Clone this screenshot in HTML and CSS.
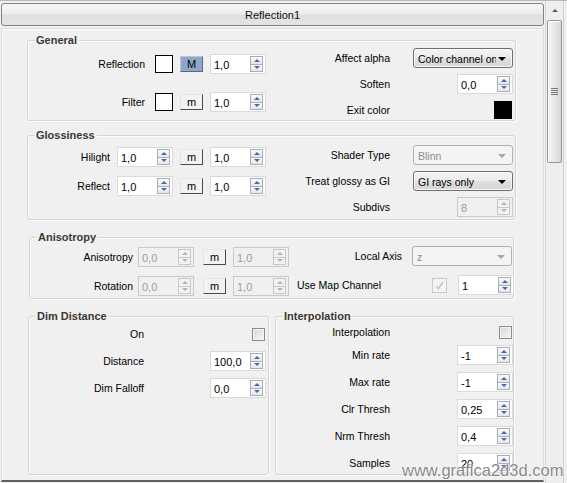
FILE: index.html
```html
<!DOCTYPE html>
<html>
<head>
<meta charset="utf-8">
<link rel="stylesheet" href="styles.css">
</head>
<body>
<div class="window">
  <div class="main">
    <div class="head">Reflection1</div>
    <div class="body">

      <div class="group g-general">
        <div class="gtitle">General</div>
        <div class="gcontent h73">
          <div class="col c-left242 pt7 gap18">
            <div class="row">
              <span class="lbl w117">Reflection</span>
              <span class="swatch white ml10"></span>
              <span class="mbtn active ml7">M</span>
              <div class="spin ml7"><span class="val">1,0</span><span class="arr"><i class="up"></i><i class="dn"></i></span></div>
            </div>
            <div class="row">
              <span class="lbl w117">Filter</span>
              <span class="swatch white ml10"></span>
              <span class="mbtn ml7">m</span>
              <div class="spin ml7"><span class="val">1,0</span><span class="arr"><i class="up"></i><i class="dn"></i></span></div>
            </div>
          </div>
          <div class="col pt1 gap6">
            <div class="row">
              <span class="lbl w120">Affect alpha</span>
              <div class="combo ml23"><span class="ctext">Color channel only</span><span class="carrow"></span></div>
            </div>
            <div class="row">
              <span class="lbl w120">Soften</span>
              <div class="spin ml67"><span class="val">0,0</span><span class="arr"><i class="up"></i><i class="dn"></i></span></div>
            </div>
            <div class="row">
              <span class="lbl w120">Exit color</span>
              <span class="swatch black ml104"></span>
            </div>
          </div>
        </div>
      </div>

      <div class="group g-gloss">
        <div class="gtitle">Glossiness</div>
        <div class="gcontent h77">
          <div class="col c-left242 pt5 gap9">
            <div class="row">
              <span class="lbl w82">Hilight</span>
              <div class="spin ml7"><span class="val">1,0</span><span class="arr"><i class="up"></i><i class="dn"></i></span></div>
              <span class="mbtn ml7">m</span>
              <div class="spin ml7"><span class="val">1,0</span><span class="arr"><i class="up"></i><i class="dn"></i></span></div>
            </div>
            <div class="row">
              <span class="lbl w82">Reflect</span>
              <div class="spin ml7"><span class="val">1,0</span><span class="arr"><i class="up"></i><i class="dn"></i></span></div>
              <span class="mbtn ml7">m</span>
              <div class="spin ml7"><span class="val">1,0</span><span class="arr"><i class="up"></i><i class="dn"></i></span></div>
            </div>
          </div>
          <div class="col pt3 gap6">
            <div class="row">
              <span class="lbl w120">Shader Type</span>
              <div class="combo disabled ml23"><span class="ctext">Blinn</span><span class="carrow"></span></div>
            </div>
            <div class="row">
              <span class="lbl w120">Treat glossy as GI</span>
              <div class="combo ml23"><span class="ctext">GI rays only</span><span class="carrow"></span></div>
            </div>
            <div class="row">
              <span class="lbl w120">Subdivs</span>
              <div class="spin disabled ml67"><span class="val">8</span><span class="arr"><i class="up"></i><i class="dn"></i></span></div>
            </div>
          </div>
        </div>
      </div>

      <div class="group g-aniso">
        <div class="gtitle">Anisotropy</div>
        <div class="gcontent h54">
          <div class="col c-left260 pt3 gap9">
            <div class="row">
              <span class="lbl w103">Anisotropy</span>
              <div class="spin disabled ml5"><span class="val">0,0</span><span class="arr"><i class="up"></i><i class="dn"></i></span></div>
              <span class="mbtn ml9">m</span>
              <div class="spin disabled ml7"><span class="val">1,0</span><span class="arr"><i class="up"></i><i class="dn"></i></span></div>
            </div>
            <div class="row">
              <span class="lbl w103">Rotation</span>
              <div class="spin disabled ml5"><span class="val">0,0</span><span class="arr"><i class="up"></i><i class="dn"></i></span></div>
              <span class="mbtn ml9">m</span>
              <div class="spin disabled ml7"><span class="val">1,0</span><span class="arr"><i class="up"></i><i class="dn"></i></span></div>
            </div>
          </div>
          <div class="col pt2 gap9">
            <div class="row">
              <span class="lbl w112">Local Axis</span>
              <div class="combo disabled ml10"><span class="ctext">z</span><span class="carrow"></span></div>
            </div>
            <div class="row">
              <span class="lbl-left ml7 w135">Use Map Channel</span>
              <span class="check disabled checked"><svg width="11" height="11" viewBox="0 0 11 11"><path d="M2 6 L4.5 8.5 L9 2" fill="none" stroke="#c4c4c4" stroke-width="1.5"/></svg></span>
              <div class="spin ml11"><span class="val">1</span><span class="arr"><i class="up"></i><i class="dn"></i></span></div>
            </div>
          </div>
        </div>
      </div>

      <div class="split">
        <div class="group g-dim">
          <div class="gtitle">Dim Distance</div>
          <div class="gcontent h151">
            <div class="col pt1 gap7">
              <div class="row">
                <span class="lbl w115">On</span>
                <span class="check ml108"></span>
              </div>
              <div class="row">
                <span class="lbl w115">Distance</span>
                <div class="spin ml66"><span class="val">100,0</span><span class="arr"><i class="up"></i><i class="dn"></i></span></div>
              </div>
              <div class="row">
                <span class="lbl w115">Dim Falloff</span>
                <div class="spin ml66"><span class="val">0,0</span><span class="arr"><i class="up"></i><i class="dn"></i></span></div>
              </div>
            </div>
          </div>
        </div>
        <div class="group g-interp">
          <div class="gtitle">Interpolation</div>
          <div class="gcontent h151">
            <div class="col gap7">
              <div class="row r-first">
                <span class="lbl w114">Interpolation</span>
                <span class="check ml109"></span>
              </div>
              <div class="row">
                <span class="lbl w114">Min rate</span>
                <div class="spin ml67"><span class="val">-1</span><span class="arr"><i class="up"></i><i class="dn"></i></span></div>
              </div>
              <div class="row">
                <span class="lbl w114">Max rate</span>
                <div class="spin ml67"><span class="val">-1</span><span class="arr"><i class="up"></i><i class="dn"></i></span></div>
              </div>
              <div class="row">
                <span class="lbl w114">Clr Thresh</span>
                <div class="spin ml67"><span class="val">0,25</span><span class="arr"><i class="up"></i><i class="dn"></i></span></div>
              </div>
              <div class="row">
                <span class="lbl w114">Nrm Thresh</span>
                <div class="spin ml67"><span class="val">0,4</span><span class="arr"><i class="up"></i><i class="dn"></i></span></div>
              </div>
              <div class="row">
                <span class="lbl w114">Samples</span>
                <div class="spin ml67"><span class="val">20</span><span class="arr"><i class="up"></i><i class="dn"></i></span></div>
              </div>
            </div>
          </div>
        </div>
      </div>

    </div>
  </div>
  <div class="scrollbar">
    <div class="sb-up"><span class="sb-tri"></span></div>
    <div class="sb-thumb"><span class="grip"></span><span class="grip"></span><span class="grip"></span><span class="grip"></span></div>
  </div>
  <div class="watermark">www.grafica2d3d.com</div>
</div>
</body>
</html>
```

FILE: styles.css
```css
* { box-sizing: border-box; }
html, body { margin: 0; padding: 0; }
body {
  background: #f0f0f0;
  font-family: "Liberation Sans", Arial, sans-serif;
  font-size: 10.5px;
  color: #000;
  width: 567px;
  height: 483px;
  overflow: hidden;
}
.window {
  position: relative;
  display: flex;
  height: 483px;
  border-top: 1px solid #b9b9b9;
}
.main {
  width: 545px;
  flex: none;
  display: flex;
  flex-direction: column;
}
.head {
  margin: 2px 0 0 1px;
  width: 543px;
  height: 23px;
  border: 1px solid #838383;
  border-radius: 3px;
  background: linear-gradient(#f6f6f6, #ececec 48%, #dedede 52%, #e4e4e4);
  display: flex;
  align-items: center;
  justify-content: center;
  color: #111;
  font-size: 11px;
}
.body {
  margin: 2px 0 0 1px;
  width: 543px;
  height: 454px;
  border: 1px solid #dcdcdc;
  border-bottom: 2px solid #5e5e5e;
  box-shadow: inset 1px 1px 0 #fff;
  padding-left: 25px;
  padding-top: 11px;
}

/* groups */
.group {
  border: 1px solid #d2d6da;
  border-radius: 3px;
  box-shadow: inset 1px 1px 0 #fbfbfb, 1px 1px 0 #fbfbfb;
}
.gtitle {
  width: fit-content;
  height: 14px;
  line-height: 14px;
  margin: -8px 0 0 6px;
  padding: 0 2px;
  background: #f0f0f0;
  font-weight: bold;
  font-size: 11px;
  color: #3d3833;
}
.gcontent { display: flex; }
.h73 { height: 73px; }
.h77 { height: 77px; }
.h54 { height: 54px; }
.h151 { height: 151px; }

.g-general { width: 489px; }
.g-gloss { width: 489px; margin-top: 14px; }
.g-aniso { width: 485px; margin-top: 17px; margin-left: 2px; }
.split { display: flex; margin-top: 17px; margin-left: 1px; gap: 6px; }
.g-dim { width: 241px; }
.g-interp { width: 239px; }

.col { display: flex; flex-direction: column; }
.c-left242 { width: 242px; flex: none; }
.c-left260 { width: 260px; flex: none; }
.pt1 { padding-top: 1px; }
.pt2 { padding-top: 2px; }
.pt3 { padding-top: 3px; }
.pt5 { padding-top: 5px; }
.pt7 { padding-top: 7px; }
.gap6 { gap: 6px; }
.gap7 { gap: 7px; }
.gap9 { gap: 9px; }
.gap18 { gap: 18px; }

.row { display: flex; align-items: center; height: 20px; flex: none; }
.r-first { height: 18px; margin-bottom: -3px; }
.lbl { flex: none; text-align: right; white-space: nowrap; }
.lbl-left { flex: none; white-space: nowrap; }
.w82 { width: 82px; }
.w103 { width: 103px; }
.w112 { width: 112px; }
.w114 { width: 114px; }
.w115 { width: 115px; }
.w117 { width: 117px; }
.w120 { width: 120px; }
.w135 { width: 135px; }
.ml5 { margin-left: 5px; }
.ml7 { margin-left: 7px; }
.ml9 { margin-left: 9px; }
.ml10 { margin-left: 10px; }
.ml11 { margin-left: 11px; }
.ml23 { margin-left: 23px; }
.ml66 { margin-left: 66px; }
.ml67 { margin-left: 67px; }
.ml104 { margin-left: 104px; }
.ml108 { margin-left: 108px; }
.ml109 { margin-left: 109px; }

/* swatch */
.swatch {
  flex: none;
  width: 18px;
  height: 18px;
  border: 1px solid #000;
}
.swatch.white { background: #fff; }
.swatch.black { background: #000; }

/* map buttons */
.mbtn {
  flex: none;
  width: 23px;
  height: 16px;
  display: flex;
  align-items: center;
  justify-content: center;
  background: #f2f2f2;
  border-top: 1px solid #e4e4e4;
  border-left: 1px solid #e4e4e4;
  border-right: 1px solid #4a4a4a;
  border-bottom: 1px solid #4a4a4a;
  font-size: 11px;
  line-height: 1;
  padding-top: 1px;
}
.mbtn.active {
  background: #8ea6c8;
  border-top-color: #b8c7dc;
  border-left-color: #b8c7dc;
  border-right-color: #5a6a80;
  border-bottom-color: #5a6a80;
}

/* spinners */
.spin {
  flex: none;
  width: 56px;
  height: 20px;
  border: 1px solid #dadada;
  background: #fff;
  display: flex;
  align-items: center;
  font-size: 11px;
}
.spin .val { flex: 1; padding-left: 3px; padding-top: 1px; white-space: nowrap; }
.arr {
  flex: none;
  width: 13px;
  height: 16px;
  margin-right: 2px;
  display: flex;
  flex-direction: column;
}
.arr i {
  flex: 1;
  border: 1px solid #a8aeb8;
  background: linear-gradient(#fafafa, #e6e6e6);
  display: flex;
  align-items: center;
  justify-content: center;
}
.arr i.dn { border-top: none; }
.arr i.up::after {
  content: "";
  border-left: 3px solid transparent;
  border-right: 3px solid transparent;
  border-bottom: 3px solid #4a69a9;
}
.arr i.dn::after {
  content: "";
  border-left: 3px solid transparent;
  border-right: 3px solid transparent;
  border-top: 3px solid #4a69a9;
}
.spin.disabled { background: #f0f0f0; border-color: #c9c9c9; color: #9c9c9c; }
.spin.disabled .arr i { border-color: #c8c8c8; background: #f2f2f2; }
.spin.disabled .arr i.up::after { border-bottom-color: #b4b4b4; }
.spin.disabled .arr i.dn::after { border-top-color: #b4b4b4; }

/* combos */
.combo {
  flex: none;
  width: 100px;
  height: 20px;
  border: 1px solid #707070;
  border-radius: 3px;
  background: linear-gradient(#f3f3f3, #ececec 48%, #dfdfdf 52%, #d6d6d6);
  display: flex;
  align-items: center;
  padding-left: 4px;
  box-shadow: inset 0 0 0 1px #f8f8f8;
  font-size: 10.5px;
}
.ctext { flex: 1; overflow: hidden; white-space: nowrap; padding-top: 1px; }
.carrow {
  flex: none;
  width: 0;
  height: 0;
  margin: 1px 6px 0 2px;
  border-left: 4px solid transparent;
  border-right: 4px solid transparent;
  border-top: 4px solid #000;
}
.combo.disabled {
  border-color: #adb2b5;
  background: #f4f4f4;
  color: #8d8d8d;
  box-shadow: none;
}
.combo.disabled .carrow { border-top-color: #a5a5a5; }

/* checkboxes */
.check {
  flex: none;
  width: 13px;
  height: 13px;
  border: 1px solid #8c8c8c;
  background: linear-gradient(135deg, #d8d8d8, #f6f6f6);
  box-shadow: inset 0 0 0 1px #f4f4f4;
  display: flex;
  align-items: center;
  justify-content: center;
}
.check.disabled {
  width: 15px;
  height: 15px;
  border-color: #c9c9c9;
  background: #f4f4f4;
}

/* scrollbar */
.scrollbar {
  flex: none;
  width: 19px;
  border-left: 1px solid #d9d9d9;
  border-right: 1px solid #d0d0d0;
  background: #eeeeee;
  display: flex;
  flex-direction: column;
  align-items: center;
}
.sb-up {
  height: 19px;
  width: 100%;
  display: flex;
  align-items: center;
  justify-content: center;
}
.sb-tri {
  width: 0;
  height: 0;
  border-left: 3px solid transparent;
  border-right: 3px solid transparent;
  border-bottom: 3px solid #5a5a5a;
}
.sb-thumb {
  width: 15px;
  height: 143px;
  border: 1px solid #969696;
  border-radius: 2px;
  background: linear-gradient(90deg, #f4f4f4, #e8e8e8 50%, #d6d6d6);
  box-shadow: inset 1px 1px 0 #fdfdfd;
  display: flex;
  flex-direction: column;
  align-items: center;
  justify-content: center;
  gap: 1px;
}
.grip {
  width: 7px;
  height: 1px;
  background: #7a7a7a;
}

/* watermark overlay */
.watermark {
  position: absolute;
  left: 402px;
  top: 460px;
  font-family: "Liberation Sans", Arial, sans-serif;
  font-size: 16.5px;
  color: #8a8a8a;
  text-shadow: 0 0 1px #fff, 0 0 2px #fff;
}
```
